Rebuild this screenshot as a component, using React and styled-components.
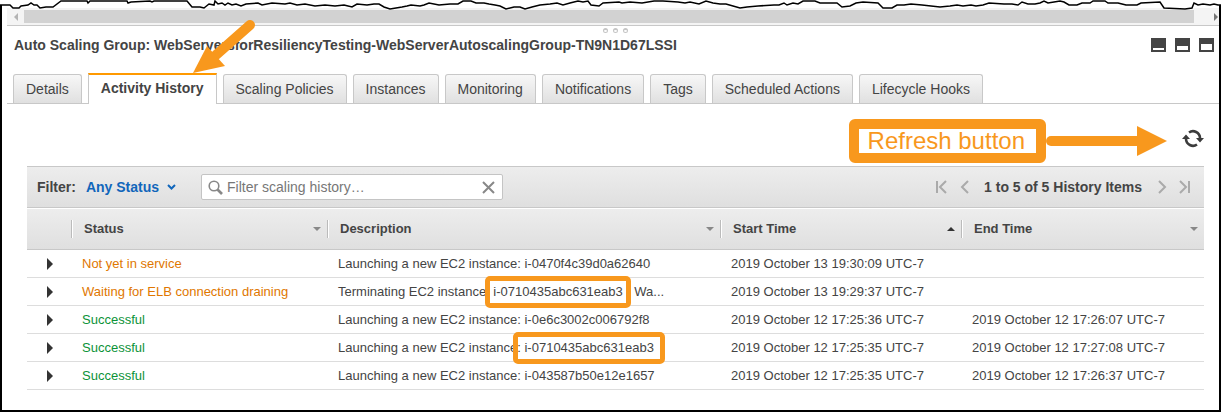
import React from 'react';
import styled, { createGlobalStyle, css } from 'styled-components';

const Global = createGlobalStyle`
  * { box-sizing: border-box; }
  body { margin: 0; background: #fff; color: #444; font: 13px/18px "Liberation Sans", Arial, sans-serif; }
  button, input { font: inherit; color: inherit; }
`;

const orange = '#f8981d';

const Frame = styled.main`
  position: relative;
  border: 2px solid #000;
  border-top: 0;
  padding: 8px 0 20px 5px;
`;

const TornEdge = styled.svg`
  position: absolute;
  top: 0;
  left: -2px;
  width: calc(100% + 4px);
  height: 12px;
  display: block;
`;

const ScrollBar = styled.div`
  display: flex;
  align-items: center;
  height: 18px;
  background: #f4f4f4;
  border-bottom: 1px solid #c8c8c8;
`;

const ScrollButton = styled.button`
  width: 17px;
  height: 17px;
  padding: 0;
  border: 0;
  background: none;
  display: flex;
  align-items: center;
  justify-content: ${p => (p.$end ? 'flex-end' : 'center')};
  ${p => p.$end && css`width: 25px; padding-right: 1px;`}
`;

const Thumb = styled.div`
  flex: 1;
  height: 13px;
  background: #d2d2d2;
`;

const Grip = styled.div`
  display: flex;
  justify-content: center;
  gap: 5px;
  height: 10px;
  padding: 2px 0 3px 5px;
  i {
    width: 5px;
    height: 5px;
    border-radius: 50%;
    border: 1px solid #c4c4c4;
    border-top-width: 2px;
  }
`;

const TitleBar = styled.header`
  display: flex;
  justify-content: space-between;
  align-items: center;
  height: 18px;
  padding: 0 5px 0 7px;
`;

const Title = styled.h1`
  margin: 0;
  font-size: 14px;
  line-height: 18px;
`;

const WindowButtons = styled.div`
  display: flex;
  gap: 9px;
`;

const WindowButton = styled.button`
  width: 15px;
  height: 14px;
  padding: 0;
  border: 2px solid #444;
  border-top-width: ${p => p.$top}px;
  background: #fff;
`;

const Tabs = styled.nav`
  display: flex;
  gap: 6px;
  margin-top: 20px;
  padding-left: 6px;
  border-bottom: 1px solid #c8c8c8;
`;

const Tab = styled.button`
  height: 29px;
  padding: 0 12px;
  border: 1px solid #c8c8c8;
  border-bottom: 0;
  border-radius: 3px 3px 0 0;
  background: linear-gradient(#f7f7f7, #e0e0e0);
  font-size: 14px;
  line-height: 28px;
  white-space: nowrap;
  ${p => p.$active && css`
    height: 31px;
    margin: -1px 0 -1px;
    padding-bottom: 2px;
    border-top: 2px solid #f90;
    border-radius: 0;
    background: #fff;
    font-weight: bold;
    line-height: 27px;
  `}
`;

const ActionRow = styled.div`
  display: flex;
  justify-content: flex-end;
  align-items: flex-start;
  height: 62px;
  padding: 12px 15px 0 0;
`;

const Callout = styled.div`
  margin-top: 3px;
  padding: 0 11px 0 9px;
  border: 10px solid ${orange};
  border-radius: 6px;
  color: ${orange};
  font-size: 24px;
  line-height: 24px;
`;

const CalloutArrow = styled.svg`
  display: block;
  margin: 10px 15px 0 0;
`;

const RefreshButton = styled.button`
  margin-top: 12px;
  padding: 0;
  border: 0;
  background: none;
  svg { display: block; }
`;

const Panel = styled.section`
  margin: 0 15px 0 20px;
`;

const FilterBar = styled.div`
  display: flex;
  align-items: center;
  height: 42px;
  padding: 0 14px 0 10px;
  border: solid #c8c8c8;
  border-width: 1px 0;
  background: linear-gradient(#ededed, #dfdfdf);
  font-size: 14px;
  font-weight: bold;
`;

const StatusButton = styled.button`
  display: flex;
  align-items: center;
  gap: 8px;
  margin-left: 10px;
  padding: 0;
  border: 0;
  background: none;
  color: #1166bb;
  font-weight: bold;
`;

const SearchBox = styled.label`
  display: flex;
  align-items: center;
  width: 302px;
  height: 26px;
  margin-left: 25px;
  padding: 0 7px 0 6px;
  border: 1px solid #c4c4c4;
  border-radius: 2px;
  background: #fff;
  input {
    flex: 1;
    min-width: 0;
    margin-left: 4px;
    padding: 0;
    border: 0;
    outline: 0;
    background: none;
    font-weight: normal;
  }
  input::placeholder { color: #777; opacity: 1; }
`;

const PlainButton = styled.button`
  display: flex;
  padding: 0;
  border: 0;
  background: none;
`;

const Pager = styled.div`
  display: flex;
  align-items: center;
  gap: 14px;
  margin-left: auto;
  white-space: nowrap;
`;

const Table = styled.table`
  width: 100%;
  margin-top: 1px;
  border-collapse: separate;
  border-spacing: 0;
  table-layout: fixed;
`;

const HeadRow = styled.tr`
  background: linear-gradient(#ededed, #dfdfdf);
`;

const HeadCell = styled.th`
  width: ${p => p.$width};
  height: 41px;
  padding: 0;
  border-bottom: 1px solid #c8c8c8;
  text-align: left;
`;

const HeadInner = styled.div`
  display: flex;
  align-items: center;
  justify-content: space-between;
  height: 18px;
  padding: 0 6px 0 12px;
  border-left: 1px solid #bbb;
  box-shadow: inset 1px 0 #fff;
`;

const Cell = styled.td`
  height: 28px;
  padding: 0 0 0 11px;
  border-bottom: 1px solid #ddd;
  line-height: 27px;
  white-space: nowrap;
  color: ${p => p.$color || 'inherit'};
`;

const ExpandButton = styled(PlainButton)`
  margin-left: 9px;
`;

const Marked = styled.span`
  position: relative;
  display: inline-block;
  &::after {
    content: '';
    position: absolute;
    inset: -2px -${p => p.$reach}px -3px;
    border: 5px solid ${orange};
    border-radius: 5px;
  }
`;

const TabArrow = styled.svg`
  position: absolute;
  top: 18px;
  left: 184px;
`;

const tabs = ['Details', 'Activity History', 'Scaling Policies', 'Instances', 'Monitoring', 'Notifications', 'Tags', 'Scheduled Actions', 'Lifecycle Hooks'];

const amber = '#e07700';
const green = '#0c9338';
const launch = 'Launching a new EC2 instance: ';
const rows = [
  { status: 'Not yet in service', color: amber, text: launch, id: 'i-0470f4c39d0a62640', start: '2019 October 13 19:30:09 UTC-7' },
  { status: 'Waiting for ELB connection draining', color: amber, text: 'Terminating EC2 instance: ', id: 'i-0710435abc631eab3', reach: 8, rest: ' - Wa...', start: '2019 October 13 19:29:37 UTC-7' },
  { status: 'Successful', color: green, text: launch, id: 'i-0e6c3002c006792f8', start: '2019 October 12 17:25:36 UTC-7', end: '2019 October 12 17:26:07 UTC-7' },
  { status: 'Successful', color: green, text: launch, id: 'i-0710435abc631eab3', reach: 11, start: '2019 October 12 17:25:35 UTC-7', end: '2019 October 12 17:27:08 UTC-7' },
  { status: 'Successful', color: green, text: launch, id: 'i-043587b50e12e1657', start: '2019 October 12 17:25:35 UTC-7', end: '2019 October 12 17:26:37 UTC-7' },
];

const columns = [
  { label: 'Status', width: '256px' },
  { label: 'Description', width: '393px' },
  { label: 'Start Time', width: '241px', sorted: true },
  { label: 'End Time', width: 'auto' },
];

const tear = '0,5 10,5 13,8 19,8 21,6 28,5 31,3 34,5 37,5 40,8 46,7 53,7 61,1 87,1 88,3 90,1 127,1 128,3 131,2 150,1 152,2 154,1 187,1 192,7 200,7 204,8 209,4 214,5 215,1 218,4 222,3 225,5 228,3 232,5 236,4 241,6 246,4 258,3 262,5 272,3 285,4 290,3 297,5 305,4 315,6 325,5 335,6 344,5 352,7 357,4 367,5 374,4 379,4 384,7 390,9 396,8 402,7 407,6 411,5 420,6 424,5 429,3 439,5 450,4 458,4 463,1 471,1 476,3 484,3 489,4 495,5 500,6 506,9 514,7 520,7 525,9 532,7 540,5 550,4 557,3 563,5 570,3 578,1 583,2 588,1 591,5 599,6 603,3 619,2 622,3 630,2 642,3 654,1 663,1 678,2 685,3 690,2 699,4 706,1 713,3 720,4 726,4 733,6 740,8 747,7 758,6 774,5 779,5 784,3 787,5 793,3 798,4 803,1 815,1 820,3 837,3 842,7 850,6 856,3 863,2 878,3 883,8 892,8 897,5 904,5 911,4 922,5 931,6 940,7 950,6 957,5 963,6 971,5 976,6 983,5 989,3 1004,4 1012,4 1018,5 1022,2 1028,4 1035,4 1040,3 1044,1 1048,3 1054,2 1060,1 1064,2 1069,5 1077,5 1082,3 1090,3 1093,1 1105,1 1108,3 1118,3 1126,5 1137,5 1141,3 1160,2 1164,8 1185,9 1192,8 1194,3 1198,5 1203,4 1210,5 1214,4 1218,5 1221,5';

const SortMark = ({ up }) => (
  <svg width="8" height="5" aria-hidden="true">
    <path d={up ? 'M0 4L4 0L8 4Z' : 'M0 0H8L4 4Z'} fill={up ? '#333' : '#888'} />
  </svg>
);

const pagerPaths = {
  'First page': 'M1 1V13M10 1L4 7L10 13',
  'Previous page': 'M7 1L1 7L7 13',
  'Next page': 'M3 1L9 7L3 13',
  'Last page': 'M1 1L7 7L1 13M10 1V13',
};

const PagerButton = ({ label }) => (
  <PlainButton aria-label={label}>
    <svg width={/First|Last/.test(label) ? 11 : 9} height="14" overflow="visible" fill="none" stroke="#aaa" strokeWidth="2"><path d={pagerPaths[label]} /></svg>
  </PlainButton>
);

export default function App() {
  return (
    <>
      <Global />
      <Frame>
        <ScrollBar>
          <ScrollButton aria-label="Scroll left"><svg width="4" height="8"><path d="M4 0V8L0 4Z" fill="#b4b4b4" /></svg></ScrollButton>
          <Thumb />
          <ScrollButton $end aria-label="Scroll right"><svg width="4" height="8"><path d="M0 0V8L4 4Z" fill="#777" /></svg></ScrollButton>
        </ScrollBar>
        <TornEdge viewBox="0 0 1221 12" preserveAspectRatio="none" aria-hidden="true">
          <polygon points={`0,0 ${tear} 1221,0`} fill="#fff" />
          <polyline points={tear} fill="none" stroke="#000" strokeWidth="1.5" />
        </TornEdge>
        <Grip><i /><i /><i /></Grip>
        <TitleBar>
          <Title>Auto Scaling Group: WebServersforResiliencyTesting-WebServerAutoscalingGroup-TN9N1D67LSSI</Title>
          <WindowButtons>
            <WindowButton $top={10} aria-label="Minimize" />
            <WindowButton $top={8} aria-label="Half height" />
            <WindowButton $top={6} aria-label="Maximize" />
          </WindowButtons>
        </TitleBar>
        <Tabs>
          {tabs.map(t => <Tab key={t} $active={t === 'Activity History'}>{t}</Tab>)}
        </Tabs>
        <TabArrow width="72" height="58" aria-hidden="true">
          <path d="M64 7L30 37" stroke={orange} strokeWidth="10" strokeLinecap="round" />
          <path d="M7 55L21 28L39 48Z" fill={orange} />
        </TabArrow>
        <ActionRow>
          <Callout>Refresh button</Callout>
          <CalloutArrow width="121" height="30" aria-hidden="true">
            <path d="M5 15H95" stroke={orange} strokeWidth="10" strokeLinecap="round" />
            <path d="M91 0L121 15L91 30Z" fill={orange} />
          </CalloutArrow>
          <RefreshButton aria-label="Refresh">
            <svg width="22" height="20" viewBox="0 0 22 20" fill="none" stroke="#3c3c3c" strokeWidth="2.6">
              <path d="M7 4.500A7 7 0 0 1 18 10M15 16.500A7 7 0 0 1 4 11" />
              <path d="M14 10H22L18 14.500ZM0 11H8L4 6.500Z" fill="#3c3c3c" stroke="none" />
            </svg>
          </RefreshButton>
        </ActionRow>
        <Panel>
          <FilterBar>
            <span>Filter:</span>
            <StatusButton>
              Any Status
              <svg width="9" height="6" fill="none" stroke="#1166bb" strokeWidth="2"><path d="M1 1L4.500 4.500L8 1" /></svg>
            </StatusButton>
            <SearchBox>
              <svg width="15" height="15" fill="none" stroke="#888" strokeWidth="2"><circle cx="6" cy="6" r="4.800" strokeWidth="1.6" /><path d="M9.500 9.500L14 14" strokeWidth="2.6" /></svg>
              <input type="text" aria-label="Filter scaling history" placeholder="Filter scaling history…" />
              <PlainButton aria-label="Clear"><svg width="13" height="13" stroke="#888" strokeWidth="2"><path d="M1 1L12 12M12 1L1 12" /></svg></PlainButton>
            </SearchBox>
            <Pager>
              <PagerButton label="First page" />
              <PagerButton label="Previous page" />
              <span>1 to 5 of 5 History Items</span>
              <PagerButton label="Next page" />
              <PagerButton label="Last page" />
            </Pager>
          </FilterBar>
          <Table>
            <thead>
              <HeadRow>
                <HeadCell $width="44px" aria-label="Expand" />
                {columns.map(c => (
                  <HeadCell key={c.label} $width={c.width}>
                    <HeadInner>{c.label}<SortMark up={c.sorted} /></HeadInner>
                  </HeadCell>
                ))}
              </HeadRow>
            </thead>
            <tbody>
              {rows.map(r => (
                <tr key={r.start + r.id}>
                  <Cell><ExpandButton aria-label="Expand row"><svg width="6" height="12"><path d="M0 0L6 6L0 12Z" fill="#333" /></svg></ExpandButton></Cell>
                  <Cell $color={r.color}>{r.status}</Cell>
                  <Cell>{r.text}{r.reach ? <Marked $reach={r.reach}>{r.id}</Marked> : r.id}{r.rest}</Cell>
                  <Cell>{r.start}</Cell>
                  <Cell>{r.end}</Cell>
                </tr>
              ))}
            </tbody>
          </Table>
        </Panel>
      </Frame>
    </>
  );
}
